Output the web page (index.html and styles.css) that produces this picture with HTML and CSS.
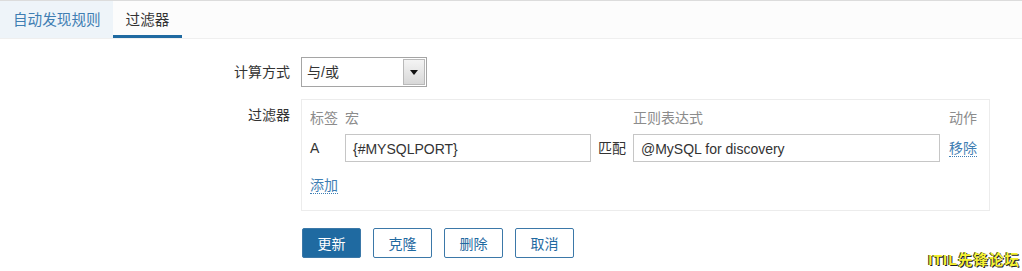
FILE: index.html
```html
<!DOCTYPE html>
<html lang="zh-CN">
<head>
    <meta charset="UTF-8">
    <title>过滤器</title>
    <link rel="stylesheet" href="styles.css">
</head>
<body>
    <!-- tabs -->
    <div class="tabs">
        <div class="tab">自动发现规则</div>
        <div class="tab tab-active">过滤器</div>
    </div>

    <!-- form -->
    <div class="form">
        <div class="form-label">计算方式</div>
        <div class="form-field">
            <div class="select">
                <span class="select-value">与/或</span>
                <span class="select-arrow"></span>
            </div>
        </div>

        <div class="form-label form-label-top">过滤器</div>
        <div class="form-field">
            <div class="filter-box">
                <div class="filter-grid">
                    <div class="th">标签</div>
                    <div class="th">宏</div>
                    <div class="th"></div>
                    <div class="th">正则表达式</div>
                    <div class="th col-action">动作</div>

                    <div class="td">A</div>
                    <div class="td"><div class="input">{#MYSQLPORT}</div></div>
                    <div class="td td-match">匹配</div>
                    <div class="td"><div class="input">@MySQL for discovery</div></div>
                    <div class="td col-action"><a class="link">移除</a></div>
                </div>
                <div class="filter-add"><a class="link">添加</a></div>
            </div>
        </div>

        <div class="form-label"></div>
        <div class="form-field buttons">
            <button class="btn btn-primary">更新</button>
            <button class="btn">克隆</button>
            <button class="btn">删除</button>
            <button class="btn">取消</button>
        </div>
    </div>

    <div class="watermark">ITIL先锋论坛</div>
</body>
</html>
```

FILE: styles.css
```css
body {
    margin: 0;
    font-family: Arial, "Liberation Sans", "Noto Sans CJK SC", sans-serif;
    font-size: 14px;
    color: #333;
    background-color: #fff;
    position: relative;
    height: 271px;
    overflow: hidden;
}

/* tabs */

.tabs {
    display: flex;
    height: 37px;
    border-top: 1px solid #dcdcdc;
    border-bottom: 1px solid #efefef;
    background-color: #fcfcfc;
}

.tab {
    display: flex;
    align-items: center;
    padding: 0 12px 2px 13px;
    font-size: 14.6px;
    color: #3f7eb3;
    background-color: #eef4f9;
}

.tab-active {
    padding: 0 12px 0 13px;
    color: #333;
    background-color: #fcfcfc;
    border-bottom: 3px solid #1f6aa1;
    width: 44px;
}

/* form */

.form {
    display: grid;
    grid-template-columns: 290px auto;
    column-gap: 11px;
    padding-top: 18px;
}

.form-label {
    text-align: right;
    line-height: 30px;
}

.form-label-top {
    line-height: 32px;
}

.form-field {
    margin-bottom: 12px;
}

.select {
    display: flex;
    width: 124px;
    height: 28px;
    border: 1px solid #a5a5a5;
    background-color: #fff;
}

.select-value {
    flex: 1;
    padding-left: 5px;
    line-height: 28px;
}

.select-arrow {
    width: 20px;
    margin: 1px;
    border: 1px solid #b9b9b9;
    background: linear-gradient(#f4f4f4, #d8d8d8);
    position: relative;
}

.select-arrow::after {
    content: "";
    position: absolute;
    left: 6px;
    top: 10px;
    border-left: 4px solid transparent;
    border-right: 4px solid transparent;
    border-top: 5px solid #111;
}

/* filter table */

.filter-box {
    width: 667px;
    height: 110px;
    padding: 0 12px 0 8px;
    border: 1px solid #ececec;
}

.filter-grid {
    display: grid;
    grid-template-columns: 35px 246px 42px 307px 37px;
    align-items: center;
}

.th {
    color: #8c8c8c;
    height: 34px;
    line-height: 36px;
}

.td {
    height: 28px;
    line-height: 28px;
}

.col-action {
    text-align: right;
}

.td-match {
    padding-left: 7px;
}

.input {
    box-sizing: border-box;
    height: 28px;
    padding-left: 7px;
    border: 1px solid #c6c6c6;
    background-color: #fff;
}

.link {
    color: #3f7eb3;
    border-bottom: 1px dotted #3f7eb3;
    cursor: pointer;
}

.filter-add {
    padding-top: 12px;
}

/* buttons */

.buttons {
    display: flex;
    gap: 12px;
    padding-top: 5px;
    padding-left: 1px;
}

.btn {
    width: 59px;
    height: 30px;
    font-family: inherit;
    font-size: 14px;
    color: #1f6aa1;
    background-color: #fff;
    border: 1px solid #3b78a8;
    border-radius: 2px;
    cursor: pointer;
}

.btn-primary {
    color: #fff;
    background-color: #1f6aa1;
}

/* watermark */

.watermark {
    position: absolute;
    right: 2px;
    bottom: 2px;
    font-weight: bold;
    font-size: 14.5px;
    letter-spacing: 1px;
    color: #f6f233;
    text-shadow: 1px 1px 0 #222, -1px 0 0 #333;
}
```
